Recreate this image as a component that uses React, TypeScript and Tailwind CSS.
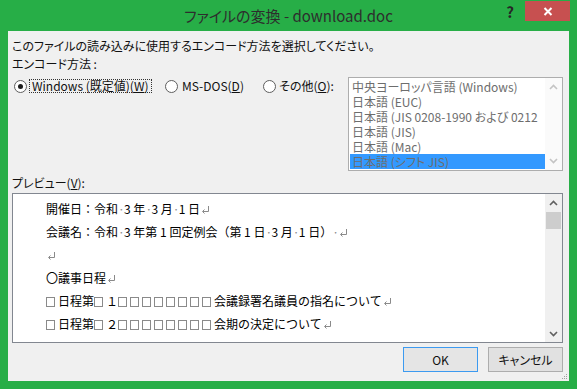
import React from "react";

const ui = "font-['Noto_Sans_CJK_JP','Noto_Sans',sans-serif] [font-feature-settings:'palt']";

function Dot() {
  return <span className="inline-block w-[6px] text-center text-[#8a8a8a]">·</span>;
}

function Ret() {
  return (
    <svg width="9" height="10" viewBox="0 0 9 10" className="inline-block ml-[1px] align-[-1px]">
      <path d="M7.5 1 V6.5 H2" stroke="#8a8a8a" strokeWidth="1" fill="none" />
      <path d="M3.5 4.5 L1.5 6.5 L3.5 8.5" stroke="#8a8a8a" strokeWidth="1" fill="none" />
    </svg>
  );
}

function Box() {
  return (
    <span className="inline-flex w-[12px] h-[12px] items-center align-[-1px]">
      <span className="block w-[9px] h-[10px] border border-[#8a8a8a]" />
    </span>
  );
}

function Radio({ checked }: { checked?: boolean }) {
  return (
    <span className="w-[13px] h-[13px] rounded-full border border-[#5e5e5e] bg-white flex items-center justify-center shrink-0">
      {checked && <span className="w-[5px] h-[5px] rounded-full bg-[#1b1b1b]" />}
    </span>
  );
}

const encodings = [
  "中央ヨーロッパ言語 (Windows)",
  "日本語 (EUC)",
  "日本語 (JIS 0208-1990 および 0212",
  "日本語 (JIS)",
  "日本語 (Mac)",
  "日本語 (シフト JIS)",
];

function Chevron({ up, color }: { up?: boolean; color: string }) {
  return (
    <svg width="9" height="6" viewBox="0 0 9 6">
      <path d={up ? "M1 5 L4.5 1.5 L8 5" : "M1 1 L4.5 4.5 L8 1"} stroke={color} strokeWidth="1.6" fill="none" />
    </svg>
  );
}

export default function App() {
  return (
    <div className={`w-[577px] h-[389px] bg-[#27ae47] flex flex-col text-[12px] text-[#111] ${ui}`}>
      {/* ------------------------ Title bar ------------------------ */}
      <div className="h-[31px] grid grid-cols-[1fr_auto_1fr]">
        <div />
        <div className="text-[15px] leading-[30px] text-[#2d2d2d] pt-[1px]">ファイルの変換 - download.doc</div>
        <div className="flex justify-end items-start pr-[7px] pt-[1px]">
          <span className="w-[14px] mt-[2px] mr-[8px] text-[15px] leading-[18px] font-bold text-[#262626] text-center">?</span>
          <span className="w-[45px] h-[20px] bg-[#c75050] flex items-center justify-center">
            <svg width="10" height="9" viewBox="0 0 10 9">
              <path d="M1.5 1 L8.5 8 M8.5 1 L1.5 8" stroke="#fff" strokeWidth="2" />
            </svg>
          </span>
        </div>
      </div>

      {/* ------------------------ Client ------------------------ */}
      <div className="mx-[8px] w-[561px] h-[350px] bg-[#f0f0f0] pl-[4px] pr-[6px] pt-[7px] flex flex-col relative">
        <p className="h-[16px] leading-[16px]">このファイルの読み込みに使用するエンコード方法を選択してください。</p>
        <p className="h-[16px] leading-[16px] mt-[2px]">エンコード方法 :</p>

        <div className="flex mt-[5px]">
          <div className="w-[336px] flex items-center h-[16px] mt-[1px]">
            <div className="w-[153px] flex items-center pl-[2px]">
              <Radio checked />
              <span className="ml-[2px] border border-dotted border-[#333] px-[2px] h-[14px] leading-[12px]">
                Windows (既定値)(<u>W</u>)
              </span>
            </div>
            <div className="w-[98px] flex items-center">
              <Radio />
              <span className="ml-[4px] leading-[14px]">MS-DOS(<u>D</u>)</span>
            </div>
            <div className="flex items-center">
              <Radio />
              <span className="ml-[3px] leading-[14px]">その他(<u>O</u>):</span>
            </div>
          </div>

          {/* ------------------------ Encoding list ------------------------ */}
          <div className="w-[215px] h-[94px] border border-[#adadad] bg-white flex">
            <div className="flex-1 pt-[1px] pl-[1px] overflow-hidden">
              {encodings.map((e, i) => (
                <div
                  key={e}
                  className={`h-[15px] leading-[15px] pl-[2px] whitespace-nowrap text-[#6d6d6d] ${i === 5 ? "bg-[#3399ff]" : ""}`}
                >
                  {e}
                </div>
              ))}
            </div>
            <div className="w-[17px] flex flex-col justify-between items-center py-[6px] bg-[#fafafa]">
              <Chevron up color="#c4c4c4" />
              <Chevron color="#c4c4c4" />
            </div>
          </div>
        </div>

        <p className="h-[16px] leading-[16px] mt-[4px]">プレビュー(<u>V</u>):</p>

        {/* ------------------------ Preview ------------------------ */}
        <div className="mt-[2px] h-[150px] border border-[#828790] bg-white flex">
          <div className="flex-1 pl-[33px] pt-[3px] font-['Noto_Sans_CJK_JP',sans-serif] [font-feature-settings:normal] text-[12px] text-black overflow-hidden">
            <div className="h-[23px] leading-[23px] whitespace-nowrap">
              開催日：令和<Dot />3 年<Dot />3 月<Dot />1 日<Ret />
            </div>
            <div className="h-[23px] leading-[23px] whitespace-nowrap">
              会議名：令和<Dot />3 年第 1 回定例会（第 1 日<Dot />3 月<Dot />1 日）<Dot /><Ret />
            </div>
            <div className="h-[23px] leading-[23px] whitespace-nowrap">
              <Ret />
            </div>
            <div className="h-[23px] leading-[23px] whitespace-nowrap">
              〇議事日程<Ret />
            </div>
            <div className="h-[23px] leading-[23px] whitespace-nowrap">
              <Box />日程第<Box />１<Box /><Box /><Box /><Box /><Box /><Box /><Box /><Box />会議録署名議員の指名について<Ret />
            </div>
            <div className="h-[23px] leading-[23px] whitespace-nowrap">
              <Box />日程第<Box />２<Box /><Box /><Box /><Box /><Box /><Box /><Box /><Box />会期の決定について<Ret />
            </div>
          </div>
          <div className="w-[17px] bg-[#f0f0f0] flex flex-col items-center">
            <div className="h-[17px] flex items-center justify-center">
              <Chevron up color="#606060" />
            </div>
            <div className="w-[15px] h-[17px] mt-[1px] bg-[#cdcdcd]" />
            <div className="flex-1" />
            <div className="h-[17px] flex items-center justify-center">
              <Chevron color="#606060" />
            </div>
          </div>
        </div>

        {/* ------------------------ Buttons ------------------------ */}
        <div className="flex justify-end gap-[10px] mt-[4px]">
          <button className="w-[75px] h-[25px] border border-[#3c9af0] bg-[#e5e5e5] text-[12px]">OK</button>
          <button className="w-[75px] h-[25px] border border-[#adadad] bg-[#e1e1e1] text-[12px]">キャンセル</button>
        </div>

        <svg width="8" height="8" viewBox="0 0 8 8" className="absolute right-[1px] bottom-[1px]">
          <rect x="6" y="2" width="1" height="1" fill="#a0a0a0" />
          <rect x="4" y="4" width="1" height="1" fill="#a0a0a0" />
          <rect x="6" y="4" width="1" height="1" fill="#a0a0a0" />
          <rect x="2" y="6" width="1" height="1" fill="#a0a0a0" />
          <rect x="4" y="6" width="1" height="1" fill="#a0a0a0" />
          <rect x="6" y="6" width="1" height="1" fill="#a0a0a0" />
        </svg>
      </div>
    </div>
  );
}
